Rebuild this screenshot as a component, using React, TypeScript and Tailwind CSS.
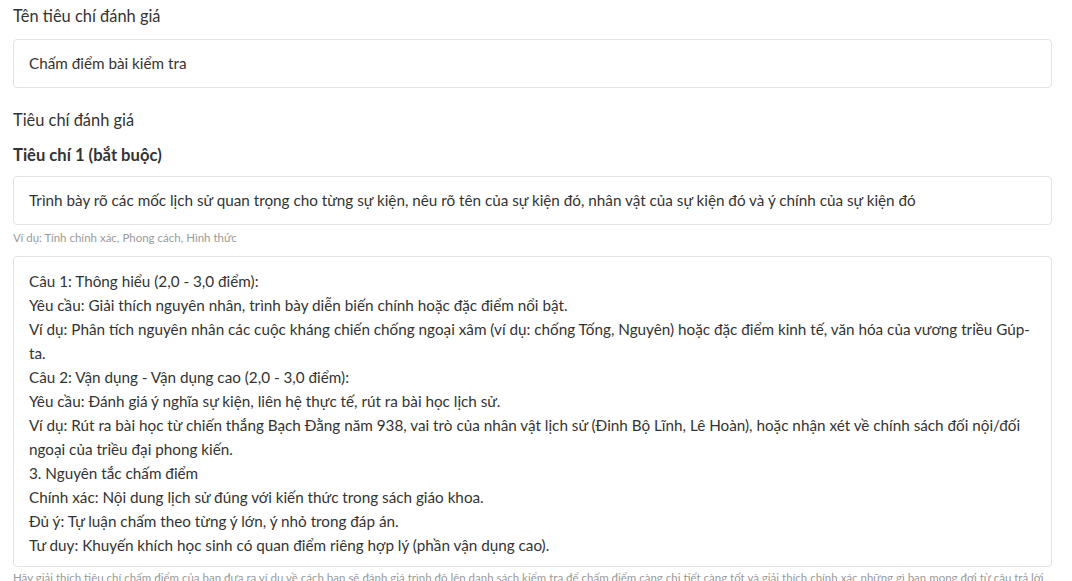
import React from "react";

const lines = [
  "Câu 1: Thông hiểu (2,0 - 3,0 điểm):",
  "Yêu cầu: Giải thích nguyên nhân, trình bày diễn biến chính hoặc đặc điểm nổi bật.",
  "Ví dụ: Phân tích nguyên nhân các cuộc kháng chiến chống ngoại xâm (ví dụ: chống Tống, Nguyên) hoặc đặc điểm kinh tế, văn hóa của vương triều Gúp-ta.",
  "Câu 2: Vận dụng - Vận dụng cao (2,0 - 3,0 điểm):",
  "Yêu cầu: Đánh giá ý nghĩa sự kiện, liên hệ thực tế, rút ra bài học lịch sử.",
  "Ví dụ: Rút ra bài học từ chiến thắng Bạch Đằng năm 938, vai trò của nhân vật lịch sử (Đinh Bộ Lĩnh, Lê Hoàn), hoặc nhận xét về chính sách đối nội/đối ngoại của triều đại phong kiến.",
  "3. Nguyên tắc chấm điểm",
  "Chính xác: Nội dung lịch sử đúng với kiến thức trong sách giáo khoa.",
  "Đủ ý: Tự luận chấm theo từng ý lớn, ý nhỏ trong đáp án.",
  "Tư duy: Khuyến khích học sinh có quan điểm riêng hợp lý (phần vận dụng cao).",
];

export default function App() {
  return (
    <div
      className="w-[1072px] h-[581px] overflow-hidden bg-white text-[#333333]"
      style={{ fontFamily: "Lato, 'Noto Sans', sans-serif" }}
    >
      <div className="pl-[13px] pr-[20px] pt-[5px]">
        <div className="text-[16.4px] leading-[22px]">Tên tiêu chí đánh giá</div>
        <div className="mt-[12px] h-[49px] border border-[#e3e3e3] rounded-[4px] px-[15px] flex items-center text-[15.25px]">
          Chấm điểm bài kiểm tra
        </div>
        <div className="mt-[21px] text-[16.4px] leading-[22px]">Tiêu chí đánh giá</div>
        <div className="mt-[13px] text-[16.6px] leading-[22px] font-bold">Tiêu chí 1 (bắt buộc)</div>
        <div className="mt-[10px] h-[49px] border border-[#e3e3e3] rounded-[4px] px-[15px] flex items-center text-[15.25px]">
          Trình bày rõ các mốc lịch sử quan trọng cho từng sự kiện, nêu rõ tên của sự kiện đó, nhân vật của sự kiện đó và ý chính của sự kiện đó
        </div>
        <div className="mt-[6px] text-[11.5px] leading-[14px] text-[#9a9a9a]">
          Ví dụ: Tính chính xác, Phong cách, Hình thức
        </div>
        <div className="mt-[11px] border border-[#e3e3e3] rounded-[4px] pl-[15px] pr-[15px] pt-[12px] pb-[9px] text-[15.25px] leading-[24px]">
          {lines.map((l, i) => (
            <div key={i}>{l}</div>
          ))}
        </div>
        <div className="mt-[4px] text-[11.5px] leading-[14px] text-[#9a9a9a] whitespace-nowrap">
          Hãy giải thích tiêu chí chấm điểm của bạn đưa ra ví dụ về cách bạn sẽ đánh giá trình độ lên danh sách kiểm tra để chấm điểm càng chi tiết càng tốt và giải thích chính xác những gì bạn mong đợi từ câu trả lời
        </div>
      </div>
    </div>
  );
}
